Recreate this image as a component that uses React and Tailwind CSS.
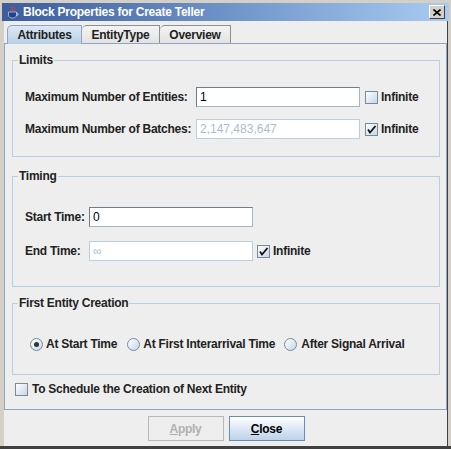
import React from "react";

function CheckBox({ checked }) {
  return (
    <span className="w-[13px] h-[13px] shrink-0 border border-[#7a8a99] bg-gradient-to-br from-white to-[#c5d6ea] flex items-center justify-center">
      {checked && (
        <svg width="11" height="11" viewBox="0 0 11 11">
          <path d="M2 5.5 L4 8.5 L9.5 2" fill="none" stroke="#111" strokeWidth="1.7" />
        </svg>
      )}
    </span>
  );
}

function Radio({ selected }) {
  return (
    <span className="w-[13px] h-[13px] shrink-0 rounded-full border border-[#7a8a99] bg-gradient-to-br from-white to-[#c5d6ea] flex items-center justify-center">
      {selected && <span className="w-[5px] h-[5px] rounded-full bg-[#333]" />}
    </span>
  );
}

function Field({ value, disabled }) {
  return (
    <div
      className={`h-[20px] w-[164px] bg-white flex items-center px-[3px] text-[12px] font-normal tracking-normal ${
        disabled
          ? "border border-[#b8cfe5] text-[#a9bdd3]"
          : "border border-t-[#6f7d8c] border-l-[#6f7d8c] border-r-[#a5b3c2] border-b-[#a5b3c2] text-black"
      }`}
    >
      {value}
    </div>
  );
}

function Group({ title, className, children }) {
  return (
    <fieldset className={`border border-[#b8cfe5] mr-[6px] ml-[7px] ${className}`}>
      <legend className="ml-[5px] px-[1px] leading-[14px] text-[12px] font-bold text-[#222]">
        {title}
      </legend>
      {children}
    </fieldset>
  );
}

export default function App() {
  return (
    <div className="w-[451px] h-[449px] bg-[#d4d0c8] flex flex-col pt-[3px] px-[2px] border-b-[3px] border-[#404040] font-['Liberation_Sans',Arial,sans-serif] text-[#222] tracking-[-0.25px] whitespace-nowrap">
      <div className="h-[18px] shrink-0 flex items-center bg-gradient-to-r from-[#3c5c9c] via-[#6f93c8] to-[#a9cbf2] pl-[5px] pr-[4px]">
        <svg width="12" height="14" viewBox="0 0 12 14">
          <path d="M5 1 C3 3 7 4 5 6" fill="none" stroke="#e04040" strokeWidth="1.2" />
          <path d="M7.5 2 C6.5 3 8.5 4 7.5 5.5" fill="none" stroke="#e04040" strokeWidth="1" />
          <path d="M1.5 7 H9.5 V10 C9.5 12 7.5 13 5.5 13 C3.5 13 1.5 12 1.5 10 Z" fill="#26408a" stroke="#dfe8f5" strokeWidth="0.6" />
          <path d="M9.5 8 C11.5 8 11.5 10.5 9.5 10.5" fill="none" stroke="#dfe8f5" strokeWidth="1" />
        </svg>
        <span className="ml-[4px] text-white font-bold text-[12px] leading-none">
          Block Properties for Create Teller
        </span>
        <div className="flex-1" />
        <div className="w-[16px] h-[14px] bg-[#d4d0c8] border border-t-white border-l-white border-r-[#404040] border-b-[#404040] flex items-center justify-center">
          <svg width="8" height="7" viewBox="0 0 8 7">
            <path d="M0.5 0.5 L7.5 6.5 M7.5 0.5 L0.5 6.5" stroke="#000" strokeWidth="1.6" />
          </svg>
        </div>
      </div>

      <div className="flex-1 ml-[2px] mr-[1px] bg-[#eeeeee] border-r border-[#404040] flex flex-col">
        <div className="flex items-end h-[22px] pl-[3px] shrink-0 text-[12px] font-bold">
          <div className="w-[75px] h-[19px] -mb-[1px] z-10 rounded-tl-[5px] border border-b-0 border-[#8da6c6] bg-gradient-to-b from-[#dde8f4] to-[#b8cfe5] flex items-center justify-center">
            Attributes
          </div>
          <div className="w-[78px] h-[18px] rounded-tl-[5px] border border-l-0 border-b-0 border-[#8f8f8f] bg-gradient-to-b from-[#f4f4f4] to-[#e2e2e2] flex items-center justify-center">
            EntityType
          </div>
          <div className="w-[71px] h-[18px] rounded-tl-[5px] border border-l-0 border-b-0 border-[#8f8f8f] bg-gradient-to-b from-[#f4f4f4] to-[#e2e2e2] flex items-center justify-center">
            Overview
          </div>
        </div>

        <div className="flex-1 min-h-0 border border-[#8da6c6] flex flex-col">
          <Group title="Limits" className="mt-[9px] pb-[17px]">
            <div className="grid grid-cols-[171px_164px_auto] gap-y-[12px] items-center pl-[12px] mt-[20px] text-[12px] font-bold">
              <span>Maximum Number of Entities:</span>
              <Field value="1" />
              <span className="flex items-center gap-[3px] ml-[5px]">
                <CheckBox />
                Infinite
              </span>
              <span>Maximum Number of Batches:</span>
              <Field value="2,147,483,647" disabled />
              <span className="flex items-center gap-[3px] ml-[5px]">
                <CheckBox checked />
                Infinite
              </span>
            </div>
          </Group>

          <Group title="Timing" className="mt-[12px] pb-[25px]">
            <div className="grid grid-cols-[64px_164px_auto] gap-y-[14px] items-center pl-[12px] mt-[24px] text-[12px] font-bold">
              <span>Start Time:</span>
              <Field value="0" />
              <span />
              <span>End Time:</span>
              <Field value="∞" disabled />
              <span className="flex items-center gap-[3px] ml-[4px]">
                <CheckBox checked />
                Infinite
              </span>
            </div>
          </Group>

          <Group title="First Entity Creation" className="mt-[9px] pb-[22px]">
            <div className="flex items-center h-[16px] pl-[17px] mt-[26px] text-[12px] font-bold">
              <Radio selected />
              <span className="ml-[3px]">At Start Time</span>
              <span className="ml-[10px]">
                <Radio />
              </span>
              <span className="ml-[3px]">At First Interarrival Time</span>
              <span className="ml-[9px]">
                <Radio />
              </span>
              <span className="ml-[4px]">After Signal Arrival</span>
            </div>
          </Group>

          <div className="flex items-center h-[16px] ml-[10px] mt-[6px] gap-[4px] text-[12px] font-bold">
            <CheckBox />
            To Schedule the Creation of Next Entity
          </div>
        </div>

        <div className="h-[36px] shrink-0 flex justify-center items-start pt-[6px] gap-[5px] pl-[1px] text-[12px] font-bold">
          <div className="w-[76px] h-[25px] border border-[#b8b8b8] bg-[#eeeeee] text-[#b0b0b0] flex items-center justify-center">
            <span>
              <span className="underline">A</span>pply
            </span>
          </div>
          <div className="w-[76px] h-[25px] border border-[#6d8bb0] bg-gradient-to-b from-white to-[#bcd2ea] text-black flex items-center justify-center">
            <span>
              <span className="underline">C</span>lose
            </span>
          </div>
        </div>
      </div>
    </div>
  );
}
